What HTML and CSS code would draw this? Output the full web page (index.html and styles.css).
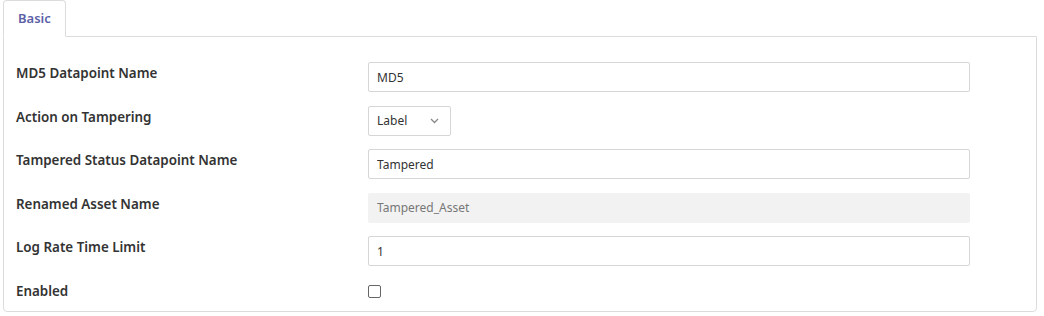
FILE: index.html
```html
<!DOCTYPE html>
<html lang="en">

<head>
    <meta charset="UTF-8">
    <title>Tamper Settings</title>
    <link rel="stylesheet" href="styles.css">
</head>

<body>
    <div class="wrap">
        <ul class="tabs">
            <li class="tab active">Basic</li>
        </ul>

        <div class="panel">
            <div class="row">
                <label class="label" for="md5">MD5 Datapoint Name</label>
                <input class="field" id="md5" type="text" value="MD5">
            </div>
            <div class="row">
                <label class="label" for="action">Action on Tampering</label>
                <div class="select">
                    <span>Label</span>
                    <svg width="9" height="6" viewBox="0 0 9 6"><path d="M1 1l3.5 3.5L8 1" fill="none" stroke="#888" stroke-width="1.3"/></svg>
                </div>
            </div>
            <div class="row">
                <label class="label" for="status">Tampered Status Datapoint Name</label>
                <input class="field" id="status" type="text" value="Tampered">
            </div>
            <div class="row">
                <label class="label" for="renamed">Renamed Asset Name</label>
                <input class="field disabled" id="renamed" type="text" value="Tampered_Asset" disabled>
            </div>
            <div class="row">
                <label class="label" for="rate">Log Rate Time Limit</label>
                <input class="field" id="rate" type="text" value="1">
            </div>
            <div class="row short">
                <label class="label" for="enabled">Enabled</label>
                <span class="check"></span>
            </div>
        </div>
    </div>
</body>

</html>
```

FILE: styles.css
```css
* {
    padding: 0;
    margin: 0;
    box-sizing: border-box;
}

body {
    font-family: "Noto Sans", "Open Sans", sans-serif;
    color: #333;
    background: #fff;
}

.wrap {
    padding: 0 7px 0 3px;
}

/* Tabs */
.tabs {
    list-style: none;
    display: flex;
    position: relative;
    z-index: 1;
    margin-bottom: -1px;
}

.tab {
    height: 37px;
    padding: 0 14px;
    font-size: 13px;
    font-weight: 600;
    line-height: 35px;
    color: #5c5fa6;
    border: 1px solid #dcdcdc;
    border-bottom-color: #fff;
    border-radius: 4px 4px 0 0;
    background: #fff;
}

/* Panel */
.panel {
    border: 1px solid #dcdcdc;
    border-radius: 0 0 4px 4px;
    padding: 25px 66px 7px 12px;
}

.row {
    display: flex;
    align-items: center;
    height: 30px;
    margin-bottom: 13.5px;
}

.row.short {
    height: 24px;
    margin-bottom: 0;
}

.label {
    width: 352px;
    flex-shrink: 0;
    align-self: flex-start;
    line-height: 22px;
    font-size: 13.4px;
    font-weight: 600;
    color: #333;
}

.field {
    flex: 1;
    height: 30px;
    padding: 0 8px;
    font-family: inherit;
    font-size: 12px;
    color: #333;
    border: 1px solid #d6d6d6;
    border-radius: 2px;
    background: #fff;
    outline: none;
}

.field.disabled {
    border-color: #f2f2f2;
    background: #f2f2f2;
    color: #777;
}

.select {
    width: 83px;
    height: 30px;
    display: flex;
    align-items: center;
    justify-content: space-between;
    padding: 0 11px 0 8px;
    font-size: 12px;
    border: 1px solid #d6d6d6;
    border-radius: 2px;
}

.check {
    width: 13px;
    height: 13px;
    border: 1px solid #666;
    border-radius: 2px;
}
```
